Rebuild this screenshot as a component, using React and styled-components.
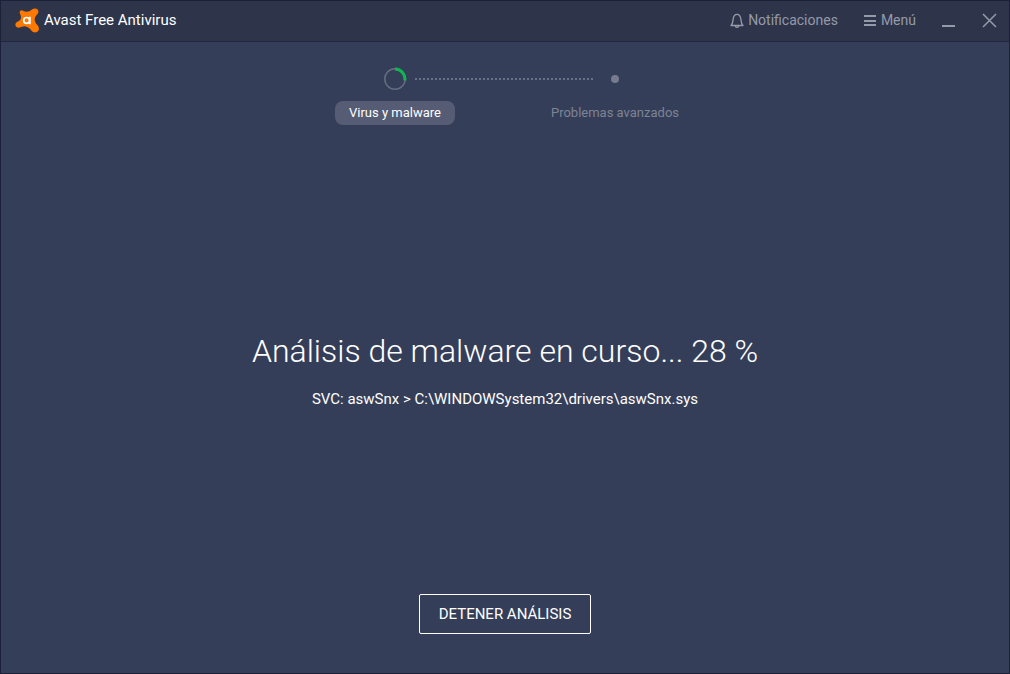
import React from 'react';
import styled, { createGlobalStyle } from 'styled-components';

const GlobalStyle = createGlobalStyle`
  * {
    box-sizing: border-box;
  }

  body {
    margin: 0;
    background: #353e59;
    color: #ffffff;
    font-family: Roboto, 'Liberation Sans', sans-serif;
  }

  button {
    font-family: inherit;
    cursor: pointer;
  }
`;

const Window = styled.div`
  display: flex;
  flex-direction: column;
  min-height: 100vh;
  border: 1px solid #1c2139;
`;

const TitleBar = styled.header`
  display: flex;
  align-items: center;
  justify-content: space-between;
  height: 41px;
  padding: 0 12px 2px 14px;
  background: #2e354b;
  border-bottom: 1px solid #20273f;
`;

const Brand = styled.div`
  display: flex;
  align-items: center;
  gap: 4px;
  font-size: 15px;
`;

const WindowActions = styled.div`
  display: flex;
  align-items: center;
  gap: 26px;
`;

const BarButton = styled.button`
  display: flex;
  align-items: center;
  gap: 4px;
  padding: 0;
  border: 0;
  background: none;
  color: #959aa8;
  font-size: 14px;
  line-height: 16px;
`;

const Content = styled.main`
  display: flex;
  flex: 1;
  flex-direction: column;
  align-items: center;
  justify-content: space-between;
  padding: 24px 16px 39px;
`;

const Progress = styled.div`
  display: flex;
  flex-direction: column;
  align-items: center;
  gap: 10px;
`;

const Track = styled.div`
  display: flex;
  align-items: center;
  height: 25px;
`;

const Marker = styled.div`
  display: flex;
  justify-content: center;
  width: 40px;
`;

const Dots = styled.div`
  width: 180px;
  height: 2px;
  background: repeating-linear-gradient(to right, #6a7183 0 2px, transparent 2px 4px);
`;

const PendingDot = styled.div`
  width: 8px;
  height: 8px;
  border-radius: 50%;
  background: #767b90;
`;

const Labels = styled.div`
  display: grid;
  grid-template-columns: 220px 220px;
  justify-items: center;
`;

const StepLabel = styled.span`
  padding: 0 14px;
  border-radius: 8px;
  background: ${({ $active }) => ($active ? '#555c74' : 'transparent')};
  color: ${({ $active }) => ($active ? '#ffffff' : '#7d8494')};
  font-size: 13px;
  line-height: 24px;
`;

const Status = styled.section`
  display: flex;
  flex-direction: column;
  align-items: center;
  gap: 18px;
  padding-top: 20px;
  text-align: center;
`;

const Title = styled.h1`
  margin: 0;
  font-size: 32px;
  font-weight: 300;
  line-height: 40px;
`;

const CurrentFile = styled.p`
  margin: 0;
  font-size: 15px;
  line-height: 20px;
`;

const StopButton = styled.button`
  height: 40px;
  padding: 0 19px;
  border: 1px solid #ffffff;
  border-radius: 2px;
  background: transparent;
  color: #ffffff;
  font-size: 15px;
`;

const Logo = () => (
  <svg width="25" height="25" viewBox="0 0 25 25" aria-hidden="true">
    <path
      d="M6.2 2.4C7.6 2.2 8.6 3.2 10 3.6C13 4 14.8 3 17 1.4C19.2 0 21.4.2 22.6 1.6C24 3.2 23.4 5.2 22 6.6C20.4 8.4 19.4 10 19.8 12.4C20.2 14.8 21.6 16 22.8 17.6C24.6 20 24.2 22.6 22.2 23.8C20 25.2 17.8 24.2 16.2 22.2C14.4 20 13 18.8 10.6 18.4C8 18 6.6 19.2 4.4 19.6C2.2 20 .4 18.8.4 16.8C.4 15.2 1.6 14.2 3 13.6C5 12.6 6 11.2 6 9C6 7.4 5.2 6.4 4.8 5C4.4 3.6 5 2.6 6.2 2.4Z"
      fill="#ff7800"
    />
    <circle cx="11.6" cy="12.4" r="2.9" fill="none" stroke="#ffffff" strokeWidth="1.7" />
    <path d="M14.9 8.8V16.2" stroke="#ffffff" strokeWidth="1.7" />
  </svg>
);

const BellIcon = () => (
  <svg width="14" height="16" viewBox="0 0 14 16" fill="none" stroke="currentColor" strokeWidth="1.3" aria-hidden="true">
    <path d="M1 13.5H13C11.5 12 11.2 10.6 10.9 7.6C10.6 4.4 9.2 2.4 7 2.4S3.4 4.4 3.1 7.6C2.8 10.6 2.5 12 1 13.5Z" strokeLinejoin="round" />
    <path d="M5.2 14C5.6 15.7 8.4 15.7 8.8 14" />
  </svg>
);

const MenuIcon = () => (
  <svg width="13" height="12" viewBox="0 0 13 12" fill="currentColor" aria-hidden="true">
    <path d="M0 1H12V3H0ZM0 6H12V8H0ZM0 10H12V12H0Z" />
  </svg>
);

const MinimizeIcon = () => (
  <svg width="14" height="14" viewBox="0 0 14 14" aria-hidden="true">
    <path d="M0 12H13V14H0Z" fill="currentColor" />
  </svg>
);

const CloseIcon = () => (
  <svg width="15" height="15" viewBox="0 0 15 15" aria-hidden="true">
    <path d="M1 1L14 14M14 1L1 14" stroke="currentColor" strokeWidth="1.5" />
  </svg>
);

const ProgressRing = () => (
  <svg width="24" height="24" viewBox="0 0 24 24" fill="none" aria-hidden="true">
    <circle cx="12" cy="12" r="10.2" stroke="#666d80" strokeWidth="1.5" />
    <path d="M12 2.1A9.9 9.9 0 0 1 21.8 13.5" stroke="#0fb750" strokeWidth="3" />
  </svg>
);

const App = () => {
  return (
    <>
      <GlobalStyle />
      <Window>
        <TitleBar>
          <Brand>
            <Logo />
            Avast Free Antivirus
          </Brand>
          <WindowActions>
            <BarButton type="button">
              <BellIcon />
              Notificaciones
            </BarButton>
            <BarButton type="button">
              <MenuIcon />
              Menú
            </BarButton>
            <BarButton type="button" aria-label="Minimizar">
              <MinimizeIcon />
            </BarButton>
            <BarButton type="button" aria-label="Cerrar">
              <CloseIcon />
            </BarButton>
          </WindowActions>
        </TitleBar>
        <Content>
          <Progress>
            <Track>
              <Marker>
                <ProgressRing />
              </Marker>
              <Dots />
              <Marker>
                <PendingDot />
              </Marker>
            </Track>
            <Labels>
              <StepLabel $active>Virus y malware</StepLabel>
              <StepLabel>Problemas avanzados</StepLabel>
            </Labels>
          </Progress>
          <Status>
            <Title>Análisis de malware en curso... 28 %</Title>
            <CurrentFile>SVC: aswSnx &gt; C:\WINDOWSystem32\drivers\aswSnx.sys</CurrentFile>
          </Status>
          <StopButton type="button">DETENER ANÁLISIS</StopButton>
        </Content>
      </Window>
    </>
  );
};

export default App;
